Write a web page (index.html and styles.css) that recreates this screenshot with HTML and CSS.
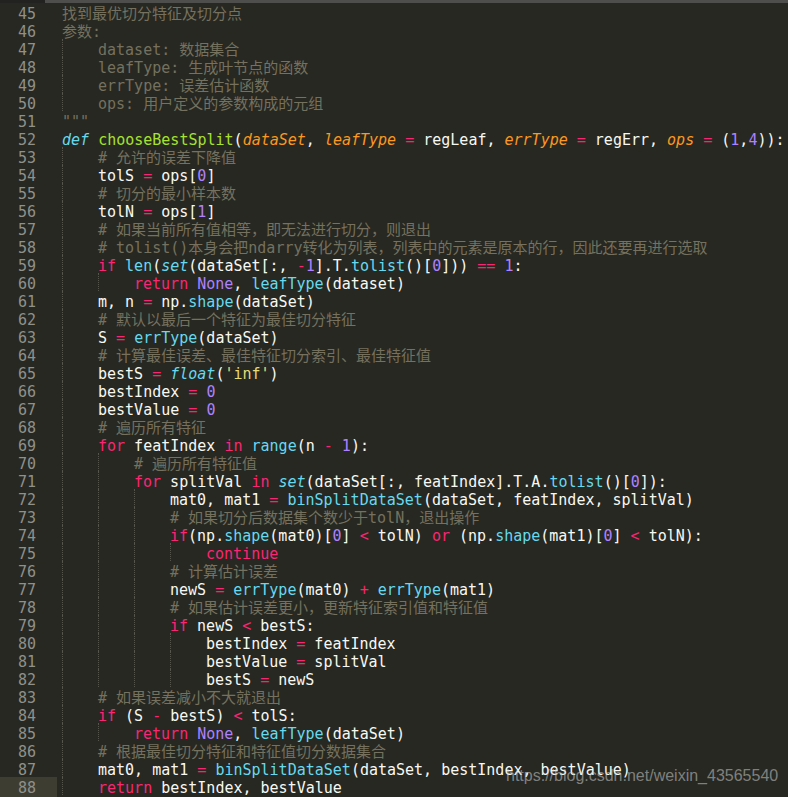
FILE: index.html
```html
<!DOCTYPE html>
<html>
<head>
<meta charset="utf-8">
<link rel="stylesheet" href="styles.css">
</head>
<body>
<div class="tabbar"><div class="tab-left"></div><div class="tab-right"></div></div>
<div class="editor">
<div class="ln"><span class="g">45</span><div class="code"><span class="c">找到最优切分特征及切分点</span></div></div>
<div class="ln"><span class="g">46</span><div class="code"><span class="c">参数:</span></div></div>
<div class="ln"><span class="g">47</span><div class="code"><span class="i"></span><span class="c">dataset: 数据集合</span></div></div>
<div class="ln"><span class="g">48</span><div class="code"><span class="i"></span><span class="c">leafType: 生成叶节点的函数</span></div></div>
<div class="ln"><span class="g">49</span><div class="code"><span class="i"></span><span class="c">errType: 误差估计函数</span></div></div>
<div class="ln"><span class="g">50</span><div class="code"><span class="i"></span><span class="c">ops: 用户定义的参数构成的元组</span></div></div>
<div class="ln"><span class="g">51</span><div class="code"><span class="c">"""</span></div></div>
<div class="ln"><span class="g">52</span><div class="code"><span class="bi">def</span> <span class="f">chooseBestSplit</span>(<span class="p">dataSet</span>, <span class="p">leafType</span> <span class="k">=</span> regLeaf, <span class="p">errType</span> <span class="k">=</span> regErr, <span class="p">ops</span> <span class="k">=</span> (<span class="n">1</span>,<span class="n">4</span>)):</div></div>
<div class="ln"><span class="g">53</span><div class="code"><span class="i"></span><span class="c"># 允许的误差下降值</span></div></div>
<div class="ln"><span class="g">54</span><div class="code"><span class="i"></span>tolS <span class="k">=</span> ops[<span class="n">0</span>]</div></div>
<div class="ln"><span class="g">55</span><div class="code"><span class="i"></span><span class="c"># 切分的最小样本数</span></div></div>
<div class="ln"><span class="g">56</span><div class="code"><span class="i"></span>tolN <span class="k">=</span> ops[<span class="n">1</span>]</div></div>
<div class="ln"><span class="g">57</span><div class="code"><span class="i"></span><span class="c"># 如果当前所有值相等，即无法进行切分，则退出</span></div></div>
<div class="ln"><span class="g">58</span><div class="code"><span class="i"></span><span class="c"># tolist()本身会把ndarry转化为列表，列表中的元素是原本的行，因此还要再进行选取</span></div></div>
<div class="ln"><span class="g">59</span><div class="code"><span class="i"></span><span class="k">if</span> <span class="b">len</span>(<span class="bi">set</span>(dataSet[:, <span class="k">-</span><span class="n">1</span>].T.<span class="b">tolist</span>()[<span class="n">0</span>])) <span class="k">==</span> <span class="n">1</span>:</div></div>
<div class="ln"><span class="g">60</span><div class="code"><span class="i"></span><span class="i"></span><span class="k">return</span> <span class="n">None</span>, <span class="b">leafType</span>(dataset)</div></div>
<div class="ln"><span class="g">61</span><div class="code"><span class="i"></span>m, n <span class="k">=</span> np.<span class="b">shape</span>(dataSet)</div></div>
<div class="ln"><span class="g">62</span><div class="code"><span class="i"></span><span class="c"># 默认以最后一个特征为最佳切分特征</span></div></div>
<div class="ln"><span class="g">63</span><div class="code"><span class="i"></span>S <span class="k">=</span> <span class="b">errType</span>(dataSet)</div></div>
<div class="ln"><span class="g">64</span><div class="code"><span class="i"></span><span class="c"># 计算最佳误差、最佳特征切分索引、最佳特征值</span></div></div>
<div class="ln"><span class="g">65</span><div class="code"><span class="i"></span>bestS <span class="k">=</span> <span class="bi">float</span>(<span class="s">'inf'</span>)</div></div>
<div class="ln"><span class="g">66</span><div class="code"><span class="i"></span>bestIndex <span class="k">=</span> <span class="n">0</span></div></div>
<div class="ln"><span class="g">67</span><div class="code"><span class="i"></span>bestValue <span class="k">=</span> <span class="n">0</span></div></div>
<div class="ln"><span class="g">68</span><div class="code"><span class="i"></span><span class="c"># 遍历所有特征</span></div></div>
<div class="ln"><span class="g">69</span><div class="code"><span class="i"></span><span class="k">for</span> featIndex <span class="k">in</span> <span class="b">range</span>(n <span class="k">-</span> <span class="n">1</span>):</div></div>
<div class="ln"><span class="g">70</span><div class="code"><span class="i"></span><span class="i"></span><span class="c"># 遍历所有特征值</span></div></div>
<div class="ln"><span class="g">71</span><div class="code"><span class="i"></span><span class="i"></span><span class="k">for</span> splitVal <span class="k">in</span> <span class="bi">set</span>(dataSet[:, featIndex].T.A.<span class="b">tolist</span>()[<span class="n">0</span>]):</div></div>
<div class="ln"><span class="g">72</span><div class="code"><span class="i"></span><span class="i"></span><span class="i"></span>mat0, mat1 <span class="k">=</span> <span class="b">binSplitDataSet</span>(dataSet, featIndex, splitVal)</div></div>
<div class="ln"><span class="g">73</span><div class="code"><span class="i"></span><span class="i"></span><span class="i"></span><span class="c"># 如果切分后数据集个数少于tolN，退出操作</span></div></div>
<div class="ln"><span class="g">74</span><div class="code"><span class="i"></span><span class="i"></span><span class="i"></span><span class="k">if</span>(np.<span class="b">shape</span>(mat0)[<span class="n">0</span>] <span class="k">&lt;</span> tolN) <span class="k">or</span> (np.<span class="b">shape</span>(mat1)[<span class="n">0</span>] <span class="k">&lt;</span> tolN):</div></div>
<div class="ln"><span class="g">75</span><div class="code"><span class="i"></span><span class="i"></span><span class="i"></span><span class="i"></span><span class="k">continue</span></div></div>
<div class="ln"><span class="g">76</span><div class="code"><span class="i"></span><span class="i"></span><span class="i"></span><span class="c"># 计算估计误差</span></div></div>
<div class="ln"><span class="g">77</span><div class="code"><span class="i"></span><span class="i"></span><span class="i"></span>newS <span class="k">=</span> <span class="b">errType</span>(mat0) <span class="k">+</span> <span class="b">errType</span>(mat1)</div></div>
<div class="ln"><span class="g">78</span><div class="code"><span class="i"></span><span class="i"></span><span class="i"></span><span class="c"># 如果估计误差更小，更新特征索引值和特征值</span></div></div>
<div class="ln"><span class="g">79</span><div class="code"><span class="i"></span><span class="i"></span><span class="i"></span><span class="k">if</span> newS <span class="k">&lt;</span> bestS:</div></div>
<div class="ln"><span class="g">80</span><div class="code"><span class="i"></span><span class="i"></span><span class="i"></span><span class="i"></span>bestIndex <span class="k">=</span> featIndex</div></div>
<div class="ln"><span class="g">81</span><div class="code"><span class="i"></span><span class="i"></span><span class="i"></span><span class="i"></span>bestValue <span class="k">=</span> splitVal</div></div>
<div class="ln"><span class="g">82</span><div class="code"><span class="i"></span><span class="i"></span><span class="i"></span><span class="i"></span>bestS <span class="k">=</span> newS</div></div>
<div class="ln"><span class="g">83</span><div class="code"><span class="i"></span><span class="c"># 如果误差减小不大就退出</span></div></div>
<div class="ln"><span class="g">84</span><div class="code"><span class="i"></span><span class="k">if</span> (S <span class="k">-</span> bestS) <span class="k">&lt;</span> tolS:</div></div>
<div class="ln"><span class="g">85</span><div class="code"><span class="i"></span><span class="i"></span><span class="k">return</span> <span class="n">None</span>, <span class="b">leafType</span>(dataSet)</div></div>
<div class="ln"><span class="g">86</span><div class="code"><span class="i"></span><span class="c"># 根据最佳切分特征和特征值切分数据集合</span></div></div>
<div class="ln"><span class="g">87</span><div class="code"><span class="i"></span>mat0, mat1 <span class="k">=</span> <span class="b">binSplitDataSet</span>(dataSet, bestIndex, bestValue)</div></div>
<div class="ln cur"><span class="g">88</span><div class="code"><span class="i"></span><span class="k">return</span> bestIndex, bestValue</div></div>
</div>
<div class="watermark">https://blog.csdn.net/weixin_43565540</div>
</body>
</html>
```

FILE: styles.css
```css
html, body {
  margin: 0;
  padding: 0;
  background: #272822;
  overflow: hidden;
}
body {
  width: 788px;
  height: 797px;
  position: relative;
  font-family: "DejaVu Sans Mono", "Noto Sans CJK SC", monospace;
  font-size: 15px;
  color: #F8F8F2;
}
.tabbar {
  display: flex;
  height: 3px;
}
.tab-left {
  width: 45px;
  background: #222220;
}
.tab-right {
  flex: 1;
  background: #4e4e4c;
}
.editor {
  display: flex;
  flex-direction: column;
}
.ln {
  display: flex;
  height: 18px;
}
.g {
  flex: none;
  width: 57px;
  height: 20px;
  padding: 2px 21px 0 0;
  box-sizing: border-box;
  line-height: 18px;
  text-align: right;
  color: #8F908A;
}
.cur .g {
  background: #3E3D32;
}
.code {
  margin-left: 5px;
  padding-top: 2px;
  line-height: 18px;
  white-space: pre;
  flex: 1;
}
.i {
  display: inline-block;
  width: 36px;
  height: 18px;
  margin-top: -2px;
  vertical-align: top;
  box-sizing: border-box;
  border-left: 1px dotted #55554d;
}
.c { color: #75715E; }
.k { color: #F92672; }
.f { color: #A6E22E; }
.p { color: #FD971F; font-style: italic; }
.b { color: #66D9EF; }
.bi { color: #66D9EF; font-style: italic; }
.n { color: #AE81FF; }
.s { color: #E6DB74; }
.watermark {
  position: absolute;
  left: 506px;
  top: 768px;
  font-family: "Liberation Sans", Arial, sans-serif;
  font-size: 16px;
  line-height: 16px;
  color: rgba(205, 205, 205, 0.55);
  white-space: nowrap;
}
```
